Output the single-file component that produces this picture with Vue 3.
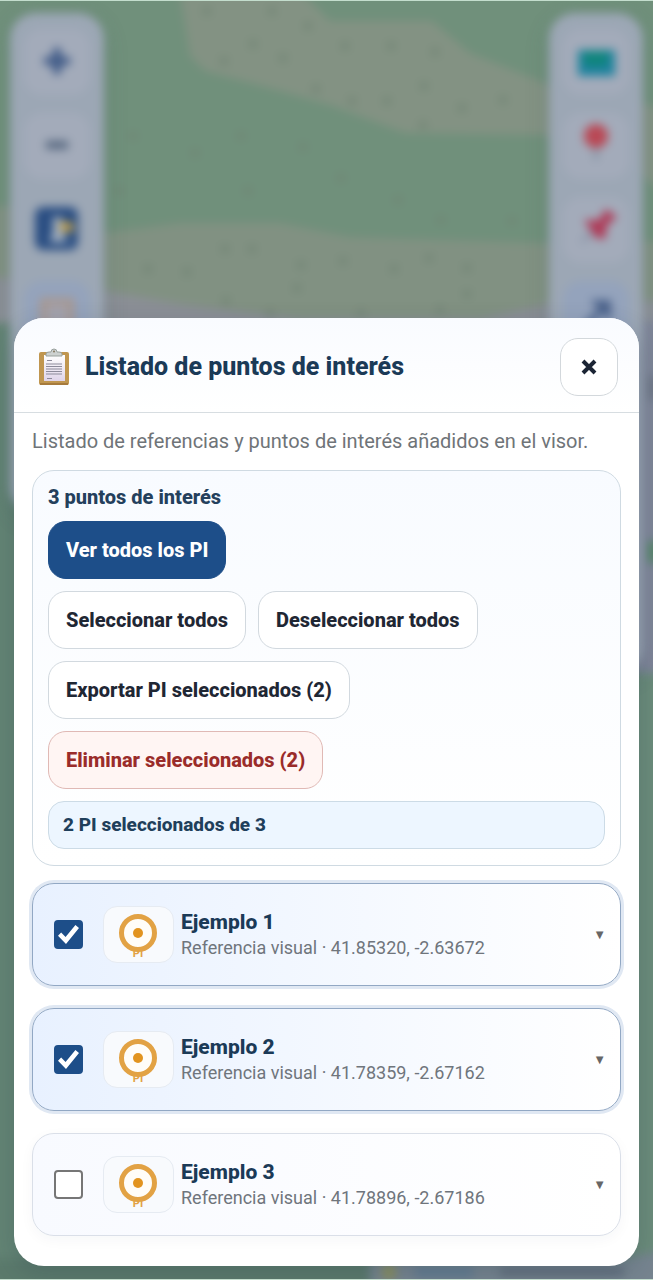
<script setup>
import { ref, computed } from 'vue';

const points = ref([
  { id: 1, name: 'Ejemplo 1', type: 'Referencia visual', coords: '41.85320, -2.63672', selected: true },
  { id: 2, name: 'Ejemplo 2', type: 'Referencia visual', coords: '41.78359, -2.67162', selected: true },
  { id: 3, name: 'Ejemplo 3', type: 'Referencia visual', coords: '41.78896, -2.67186', selected: false },
]);

const open = ref(true);
const total = computed(() => points.value.length);
const selected = computed(() => points.value.filter((p) => p.selected).length);

const trees = [
  [207, 10], [272, 10], [308, 25], [253, 43], [283, 57], [224, 60], [345, 45], [391, 45], [435, 51],
  [424, 85], [316, 88], [352, 100], [387, 100], [462, 107], [503, 99], [423, 124], [241, 135],
  [303, 146], [341, 177], [248, 190], [398, 199], [133, 135], [195, 152], [119, 190], [441, 219],
  [225, 248], [252, 248], [301, 264], [343, 260], [394, 268], [429, 257], [467, 267], [297, 287],
  [148, 268], [187, 271], [226, 300], [270, 312], [361, 312], [440, 309], [467, 293], [512, 220],
];

const setAll = (value) => points.value.forEach((p) => (p.selected = value)),
  removeSelected = () => {
    points.value = points.value.filter((p) => !p.selected);
  };
</script>

<template>
  <div class="page">
    <div class="backdrop" inert>
      <svg class="map" viewBox="-20 -20 693 1320" preserveAspectRatio="xMidYMin slice">
        <rect x="-20" y="-20" width="693" height="1320" fill="#70907b" />
        <path d="M178-20H290L330 20H432L470 52L560 88L680 110V200L600 150L545 134L405 132L330 104L280 90L205 70L190 55Z" fill="#839283" />
        <path d="M-20 205L20 205L105 232L180 222L280 222L350 236L540 242L680 240V420H-20Z" fill="#819182" />
        <path d="M-20 275L60 282L180 303L300 318L480 318L560 300L680 300V420H-20Z" fill="#8b8f96" />
        <rect x="-20" y="322" width="60" height="980" fill="#638474" />
        <path d="M620 320H680V680H620Z" fill="#80869a" />
        <rect x="645" y="375" width="30" height="24" fill="#737a8b" />
        <rect x="645" y="540" width="30" height="22" fill="#5d8770" />
        <rect x="620" y="672" width="60" height="640" fill="#6a8b7a" />
        <rect x="-20" y="1258" width="400" height="60" fill="#5b7a6c" />
        <path d="M370 1258H620L680 1246V1310H370Z" fill="#76848f" />
        <circle cx="389" cy="1271" r="8" fill="#8a9060" />
        <rect x="415" y="1266" width="58" height="10" fill="#607b90" />
        <rect x="500" y="1267" width="124" height="7" fill="#5c6978" />
        <circle v-for="[x, y] in trees" :key="x + '-' + y" :cx="x" :cy="y" r="4" fill="#728575" />
      </svg>
      <div class="toolbar zoom">
        <button class="tool">
          <svg viewBox="0 0 48 48"><path d="M24 10V36M11 23H37" stroke="#3f5a87" stroke-width="8" /></svg>
        </button>
        <button class="tool">
          <svg viewBox="0 0 48 48"><path d="M13 23H35" stroke="#56677f" stroke-width="8" /></svg>
        </button>
        <button class="tool flat">
          <svg viewBox="0 0 48 48">
            <rect x="2" y="1" width="43" height="43" rx="8" fill="#294d82" />
            <path d="M20 11H29V27L35 36H16L20 27Z" fill="#a5b2c2" />
            <path d="M26 16L39 16L41 25L29 27Z" fill="#c2a14d" />
          </svg>
        </button>
        <button class="tool active">
          <svg viewBox="0 0 48 48">
            <path d="M10 11H38V48H10Z" fill="#a3a2ac" stroke="#a8978f" stroke-width="6" />
          </svg>
        </button>
      </div>
      <div class="toolbar">
        <button class="tool">
          <svg viewBox="0 0 48 48">
            <rect x="6" y="12" width="37" height="26" fill="#1f82a0" />
            <path d="M11 14H37L35 28H12Z" fill="#0f857b" />
          </svg>
        </button>
        <button class="tool">
          <svg viewBox="0 0 48 48">
            <path d="M24 24V38" stroke="#8490a0" stroke-width="4" />
            <circle cx="24" cy="14" r="12" fill="#b94855" />
          </svg>
        </button>
        <button class="tool">
          <svg viewBox="0 0 48 48">
            <path d="M10 36L21 25" stroke="#828ca0" stroke-width="3" />
            <path d="M12 14L27 14L34 3L45 11L35 19L33 33L24 32Z" fill="#ae3b58" />
          </svg>
        </button>
        <button class="tool active">
          <svg viewBox="0 0 48 48">
            <path d="M13 37L30 19M25 13L36 13L36 24Z" fill="#4a618a" stroke="#4a618a" stroke-width="6" />
          </svg>
        </button>
      </div>
    </div>

    <section v-if="open" class="modal" role="dialog" aria-labelledby="modal-title">
      <header class="modal-header">
        <svg class="clipboard" viewBox="0 0 32 38">
          <defs>
            <linearGradient id="paper" x1="0" y1="0" x2="0" y2="1">
              <stop offset="0" stop-color="#fff" />
              <stop offset="1" stop-color="#dfd4ea" />
            </linearGradient>
          </defs>
          <rect x="1" y="4" width="30" height="33" rx="2" fill="#c09650" />
          <path d="M2 36H30" stroke="#a67a3c" stroke-width="2" />
          <rect x="6" y="7" width="21" height="26" fill="url(#paper)" />
          <path d="M9 12.500H14M8 16H24M8 18.500H24M8 21H24M8 23.500H24M8 26H24M9 30.500H14" stroke="#8d8b9b" stroke-width="1" />
          <path d="M8 8V6Q8 4 11 4H13Q13 1 16 1T19 4H21Q24 4 24 6V8Z" fill="#cdd1d0" stroke="#98a09d" stroke-width="1" />
          <circle cx="16" cy="3.500" r="1" fill="#84765e" />
        </svg>
        <h1 id="modal-title">Listado de puntos de interés</h1>
        <button class="close" aria-label="Cerrar" @click="open = false">
          <svg viewBox="0 0 16 16"><path d="M2 2L14 14M14 2L2 14" stroke="#1b2434" stroke-width="4" /></svg>
        </button>
      </header>

      <div class="modal-body">
        <p class="intro">Listado de referencias y puntos de interés añadidos en el visor.</p>

        <div class="panel">
          <h2>{{ total }} puntos de interés</h2>
          <div class="actions">
            <button class="btn primary">Ver todos los PI</button>
            <div class="row">
              <button class="btn" @click="setAll(true)">Seleccionar todos</button>
              <button class="btn" @click="setAll(false)">Deseleccionar todos</button>
            </div>
            <button class="btn">Exportar PI seleccionados ({{ selected }})</button>
            <button class="btn danger" @click="removeSelected">Eliminar seleccionados ({{ selected }})</button>
          </div>
          <div class="status">{{ selected }} PI seleccionados de {{ total }}</div>
        </div>

        <ul class="points">
          <li v-for="p in points" :key="p.id" class="point" :class="{ selected: p.selected }">
            <input :id="'point-' + p.id" v-model="p.selected" type="checkbox" />
            <label class="point-label" :for="'point-' + p.id">
              <span class="thumb">
                <svg viewBox="0 0 48 48">
                  <circle cx="23" cy="22" r="16.500" fill="#fffdf8" stroke="#e2a244" stroke-width="5" />
                  <circle cx="23" cy="22" r="5" fill="#e2941f" />
                  <text x="23" y="46" text-anchor="middle">PI</text>
                </svg>
              </span>
              <span class="info">
                <strong>{{ p.name }}</strong>
                <span>{{ p.type }} · {{ p.coords }}</span>
              </span>
            </label>
            <button class="expand" :aria-label="'Desplegar ' + p.name">▼</button>
          </li>
        </ul>
      </div>
    </section>
  </div>
</template>

<style>
body {
  background: #70907b;
}
</style>

<style scoped>
.page {
  position: relative;
  box-sizing: border-box;
  min-height: 100vh;
  padding: 14px 14px 13px;
  display: flex;
  flex-direction: column;
  justify-content: flex-end;
  overflow: hidden;
  font-family: Roboto, 'Liberation Sans', sans-serif;
  color: #1f2937;
  border-top: 1px solid #c3ddcd;
  border-bottom: 1px solid #c3ddcd;
}

.page *,
.page *::after {
  box-sizing: border-box;
}

button {
  font-family: inherit;
  cursor: pointer;
}

.backdrop {
  position: absolute;
  inset: 0;
  display: flex;
  justify-content: space-between;
  align-items: flex-start;
  padding: 12px 10px;
}

.map {
  position: absolute;
  top: -20px;
  left: -20px;
  width: calc(100% + 40px);
  height: calc(100% + 40px);
  filter: blur(5px);
}

.toolbar {
  position: relative;
  display: flex;
  flex-direction: column;
  gap: 18px;
  height: 660px;
  padding: 16px 14px;
  border-radius: 26px;
  background: #9ca7b5;
  box-shadow: 0 6px 20px #3c5a5a40;
  filter: blur(5px);
}

.toolbar.zoom {
  height: 500px;
}

.tool {
  width: 66px;
  height: 66px;
  padding: 9px;
  border: 0;
  border-radius: 18px;
  background: #a3abba;
}

.tool.flat {
  background: none;
}

.tool.active {
  background: #94a3bc;
}

.tool svg {
  display: block;
  width: 48px;
  height: 48px;
}

.modal {
  position: relative;
  border-radius: 30px;
  background: #fff;
  box-shadow: 0 8px 24px #1e324633;
  overflow: hidden;
}

.modal-header {
  display: flex;
  align-items: center;
  gap: 14px;
  padding: 20px 21px 16px 23px;
  background: linear-gradient(#f9fbff, #fff);
  border-bottom: 1px solid #d7dde1;
}

.clipboard {
  width: 34px;
  height: 38px;
}

h1 {
  flex: 1;
  margin: 0;
  font-size: 25px;
  line-height: 32px;
  font-weight: 800;
  color: #1b3a57;
}

.close {
  display: flex;
  align-items: center;
  justify-content: center;
  width: 58px;
  height: 58px;
  border: 1px solid #d3d8dc;
  border-radius: 18px;
  background: #fff;
}

.close svg {
  width: 16px;
  height: 16px;
}

.modal-body {
  padding: 16px 18px 30px;
}

.intro {
  margin: 0 0 16px;
  font-size: 20px;
  line-height: 25px;
  color: #6f7478;
}

.panel {
  padding: 12px 15px 16px;
  border: 1px solid #cfdae2;
  border-radius: 22px;
  background: linear-gradient(#f8fbff, #fff);
}

h2 {
  margin: 0 0 10px;
  font-size: 20px;
  line-height: 28px;
  font-weight: 800;
  color: #24405c;
}

.actions {
  display: flex;
  flex-direction: column;
  align-items: flex-start;
  gap: 12px;
  margin-bottom: 12px;
}

.row {
  display: flex;
  flex-wrap: wrap;
  gap: 12px;
}

.btn {
  height: 58px;
  padding: 0 17px;
  border: 1px solid #d2d9df;
  border-radius: 18px;
  background: #fff;
  font-size: 20px;
  font-weight: 800;
  color: #1f2734;
}

.btn.primary {
  border-color: #1d4e89;
  background: #1d4e89;
  color: #fff;
}

.btn.danger {
  border-color: #e0b9b5;
  background: #fff5f3;
  color: #9a2c2a;
}

.status {
  padding: 10px 14px;
  border: 1px solid #ccdbe6;
  border-radius: 16px;
  background: #edf6ff;
  font-size: 19px;
  line-height: 26px;
  font-weight: 800;
  color: #1f3f5b;
}

.points {
  display: flex;
  flex-direction: column;
  gap: 22px;
  margin: 17px 0 0;
  padding: 0;
  list-style: none;
}

.point {
  display: flex;
  align-items: center;
  gap: 20px;
  padding: 22px 14px 22px 21px;
  border: 1px solid #dadfe8;
  border-radius: 22px;
  background: linear-gradient(90deg, #f8faff, #fff);
  box-shadow: 0 4px 14px #1e32460a;
}

.point.selected {
  border-color: #92a8c4;
  background: linear-gradient(90deg, #e8f1ff, #fff);
  box-shadow: 0 0 0 3px #e0e8f3;
}

.point input {
  appearance: none;
  display: flex;
  align-items: center;
  justify-content: center;
  width: 29px;
  height: 29px;
  margin: 0;
  border: 2px solid #767676;
  border-radius: 4px;
  background: #fff;
}

.point input:checked {
  border-color: #1d4e89;
  background: #1d4e89;
}

.point input:checked::after {
  content: '';
  width: 21px;
  height: 20px;
  background: #fff;
  clip-path: polygon(0 56%, 15% 40%, 36% 62%, 83% 2%, 100% 17%, 38% 97%);
}

.point-label {
  flex: 1;
  display: flex;
  align-items: center;
  gap: 7px;
}

.thumb {
  display: flex;
  align-items: center;
  justify-content: center;
  width: 71px;
  height: 57px;
  border: 1px solid #e6ebf2;
  border-radius: 14px;
  background: #f8fafd;
}

.thumb svg {
  width: 48px;
  height: 48px;
  overflow: visible;
}

.thumb text {
  font-size: 11px;
  font-weight: 700;
  fill: #e2a244;
}

.info {
  display: flex;
  flex-direction: column;
  padding-bottom: 2px;
  font-size: 18px;
  line-height: 24px;
  color: #6f757c;
}

.info strong {
  font-size: 21px;
  line-height: 28px;
  font-weight: 800;
  color: #1b3a57;
}

.expand {
  padding: 0;
  border: 0;
  background: none;
  font-size: 13px;
  color: #666;
}
</style>
